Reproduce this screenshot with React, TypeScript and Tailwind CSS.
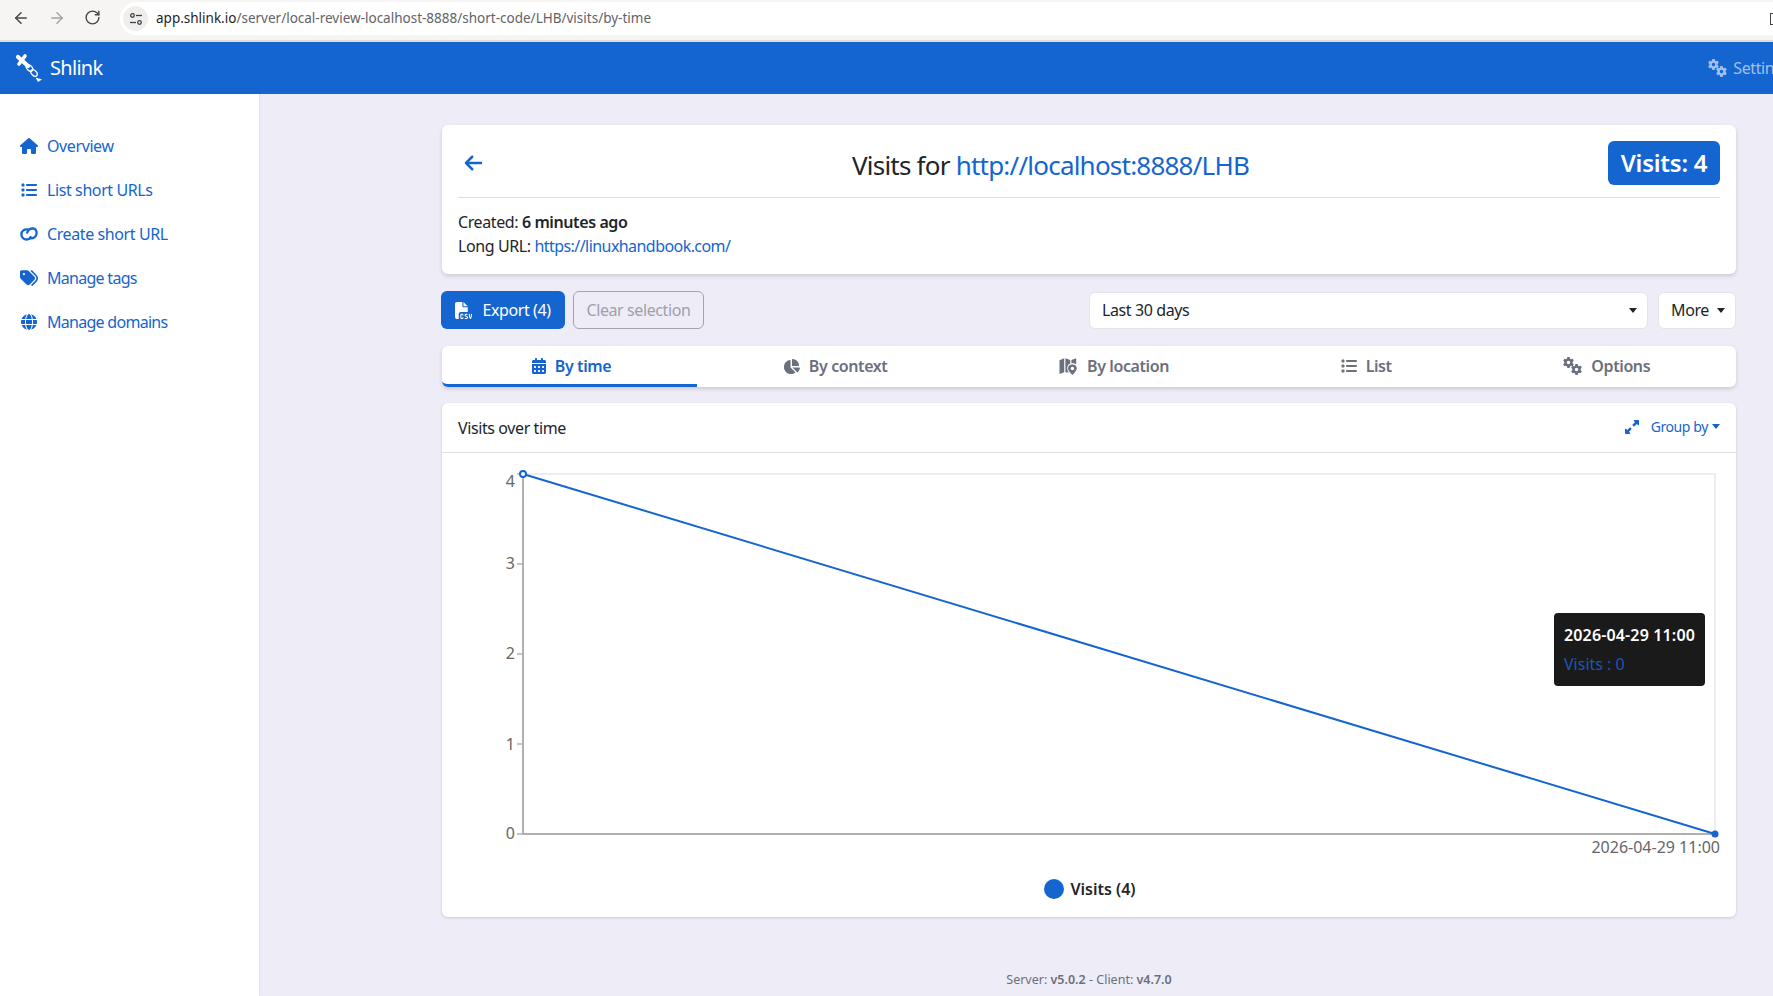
import type { ComponentType } from "react"
import { ArrowLeft, ArrowRight, RotateCw } from "lucide-react"
import {
  FaArrowLeft,
  FaCalendarDays,
  FaChartPie,
  FaFileCsv,
  FaGear,
  FaGlobe,
  FaHouse,
  FaList,
  FaTags,
  FaUpRightAndDownLeftFromCenter,
} from "react-icons/fa6"

type Icon = ComponentType<{ className?: string }>

function GearsIcon({ className }: { className?: string }) {
  return (
    <span className={`relative inline-block h-[18px] w-[19px] shrink-0 ${className ?? ""}`}>
      <FaGear className="absolute left-0 top-0 h-[11px] w-[11px]" />
      <FaGear className="absolute bottom-0 right-0 h-[11px] w-[11px]" />
    </span>
  )
}

function LinkIcon({ className }: { className?: string }) {
  return (
    <svg viewBox="0 0 18 14" fill="none" stroke="currentColor" strokeWidth="2.3" strokeLinecap="round" className={className}>
      <path d="M8.3 2.6 C4.4 1.6 1.4 4 1.4 7.4 C1.4 10.8 4.4 12.9 7.4 12.4 C9 12.1 10 11.2 10.6 10.1" />
      <path d="M7.2 5.6 C7.9 3.1 10.4 1.3 13 1.5 C15.3 1.7 16.8 3.8 16.6 6.2 C16.4 9.6 13.6 11.6 10.6 11.4" />
    </svg>
  )
}

function MapPinIcon({ className }: { className?: string }) {
  return (
    <svg viewBox="0 0 19 18" className={className} fill="currentColor">
      <path d="M0.5 3.2 L5.2 1.2 V15.2 L0.5 17 Z" />
      <path d="M6.4 1.2 L11.2 3 V6.6 C9.4 7.4 8.2 9.2 8.2 11.2 C8.2 12.6 9 14.2 9.9 15.6 L6.4 15.2 Z" />
      <path d="M12.4 3 L17.2 1.2 V7.6 C16.2 6.6 14.6 6 12.4 6.4 Z" />
      <path d="M13.4 7.4 A4.4 4.4 0 0 0 9 11.6 C9 13.6 11.6 16.4 13.4 18 C15.2 16.4 17.8 13.6 17.8 11.6 A4.4 4.4 0 0 0 13.4 7.4 Z" />
      <circle cx="13.4" cy="11.5" r="1.7" fill="#fff" />
    </svg>
  )
}

const navItems: { label: string; icon: Icon; iconClass: string; labelClass?: string }[] = [
  { label: "Overview", icon: FaHouse, iconClass: "h-[16px] w-[18px]" },
  { label: "List short URLs", icon: FaList, iconClass: "h-[16px] w-[16px]" },
  { label: "Create short URL", icon: LinkIcon, iconClass: "h-[14px] w-[18px]" },
  { label: "Manage tags", icon: FaTags, iconClass: "h-[18px] w-[18px]", labelClass: "tracking-[-0.045em]" },
  { label: "Manage domains", icon: FaGlobe, iconClass: "h-[16px] w-[16px]", labelClass: "tracking-[-0.045em]" },
]

const tabs: { label: string; icon: Icon; iconClass: string; active?: boolean }[] = [
  { label: "By time", icon: FaCalendarDays, iconClass: "h-[16px] w-[14px]", active: true },
  { label: "By context", icon: FaChartPie, iconClass: "h-[17px] w-[17px]" },
  { label: "By location", icon: MapPinIcon, iconClass: "h-[18px] w-[19px]" },
  { label: "List", icon: FaList, iconClass: "h-[16px] w-[16px]" },
  { label: "Options", icon: GearsIcon, iconClass: "" },
]

const yTicks = [
  { label: "4", y: 21, textY: 35 },
  { label: "3", y: 111, textY: 117 },
  { label: "2", y: 201, textY: 207 },
  { label: "1", y: 291, textY: 298 },
  { label: "0", y: 381, textY: 387 },
]

function ShlinkLogo() {
  return (
    <svg width="28" height="30" viewBox="0 0 28 30" fill="none" className="shrink-0">
      <path d="M3 4 L13 13" stroke="#fff" strokeWidth="4.2" strokeLinecap="round" />
      <path d="M10 3 L4 11" stroke="#fff" strokeWidth="3.6" strokeLinecap="round" />
      <ellipse cx="14.5" cy="15" rx="2.5" ry="3.8" transform="rotate(-45 14.5 15)" stroke="#fff" strokeWidth="1.3" />
      <ellipse cx="19" cy="20" rx="2.5" ry="3.8" transform="rotate(-45 19 20)" stroke="#fff" strokeWidth="1.3" />
      <path d="M20.5 24.5 L27 26.5 L23 29 Z" fill="#fff" />
    </svg>
  )
}

function BrowserBar() {
  return (
    <div className="flex h-[42px] items-start border-b-2 border-[#dedcd9] bg-[#f6f5f3] tracking-normal">
      <div className="flex h-[35px] w-[120px] shrink-0 items-center">
        <ArrowLeft className="ml-[12px] h-[18px] w-[18px] text-[#45474a]" strokeWidth={2} />
        <ArrowRight className="ml-[18px] h-[18px] w-[18px] text-[#a4a5a7]" strokeWidth={2} />
        <RotateCw className="ml-[18px] h-[17px] w-[17px] text-[#45474a]" strokeWidth={2} />
      </div>
      <div className="mt-[2px] flex h-[33px] flex-1 items-center rounded-l-full bg-white pl-[3px]">
        <div className="flex h-[25px] w-[25px] items-center justify-center rounded-full bg-[#efeeec]">
          <svg width="14" height="14" viewBox="0 0 14 14" fill="none" stroke="#3c3f43" strokeWidth="1.3">
            <circle cx="3.5" cy="3.5" r="1.8" />
            <path d="M7 3.5 H13" />
            <circle cx="10.5" cy="10.5" r="1.8" />
            <path d="M1 10.5 H7" />
          </svg>
        </div>
        <span className="ml-[8px] text-[13.5px] text-[#5f6368]">
          <span className="text-[#1f1f1f]">app.shlink.io</span>
          /server/local-review-localhost-8888/short-code/LHB/visits/by-time
        </span>
        <span className="ml-auto h-[12px] w-[3px] border-y border-l border-[#444]" />
      </div>
    </div>
  )
}

function Caret({ className }: { className: string }) {
  return <span className={`inline-block border-x-[4.5px] border-t-[5px] border-x-transparent ${className}`} />
}

function VisitsChart() {
  return (
    <div className="relative tracking-normal">
      <svg width="1294" height="412" viewBox="0 0 1294 412" className="block" fontFamily="'Noto Sans', sans-serif">
        <path d="M81 21 H1273 V381" stroke="#e7e7e7" strokeWidth="1.5" fill="none" />
        <path d="M81 21 V381 H1273" stroke="#b0b0b0" strokeWidth="2" fill="none" />
        {yTicks.map((tick) => (
          <g key={tick.label}>
            <path d={`M75 ${tick.y} H81`} stroke="#b0b0b0" strokeWidth="1.5" />
            <text x="73" y={tick.textY - 1} textAnchor="end" fontSize="16" fill="#666666">
              {tick.label}
            </text>
          </g>
        ))}
        <path d="M81 21 L1273 381" stroke="#1565d0" strokeWidth="2" />
        <circle cx="81" cy="21" r="3" fill="#fff" stroke="#1565d0" strokeWidth="2" />
        <circle cx="1273" cy="381" r="3.5" fill="#1565d0" />
        <text x="1278" y="400" textAnchor="end" fontSize="16" fill="#666666">
          2026-04-29 11:00
        </text>
      </svg>
      <div className="absolute left-[1112px] top-[160px] h-[73px] w-[151px] rounded bg-[#1a1a1a] px-[10px] pt-[10px] text-[16px] leading-6">
        <div className="whitespace-nowrap font-semibold tracking-[0.15px] text-white">2026-04-29 11:00</div>
        <div className="mt-[5px] text-[#1a56b8]">Visits : 0</div>
      </div>
    </div>
  )
}

export default function App() {
  return (
    <div className="h-[996px] w-[1773px] overflow-hidden bg-[#eeedf7] font-['Noto_Sans',sans-serif] text-[16px] tracking-[-0.025em] text-[#212529]">
      <BrowserBar />

      <header className="flex h-[52px] w-[1807px] items-center justify-between bg-[#1565d0] pl-[15px] pr-[16px] text-white">
        <div className="flex items-center gap-[7px]">
          <ShlinkLogo />
          <span className="text-[20px] tracking-[-0.035em]">Shlink</span>
        </div>
        <div className="flex items-center gap-[6px] text-[#9fc0ee]">
          <GearsIcon />
          <span>Settings</span>
        </div>
      </header>

      <div className="flex h-[902px]">
        <aside className="w-[259px] shrink-0 bg-white pt-[30px] shadow-[1px_0_2px_rgba(0,0,0,0.05)]">
          <ul className="flex flex-col">
            {navItems.map(({ label, icon: NavIcon, iconClass, labelClass }) => (
              <li key={label} className="flex h-[44px] items-center gap-[9px] pl-[20px] text-[#1565d0]">
                <span className="flex w-[18px] justify-center">
                  <NavIcon className={iconClass} />
                </span>
                <span className={labelClass}>{label}</span>
              </li>
            ))}
          </ul>
        </aside>

        <main className="flex min-w-0 flex-1 flex-col pl-[183px] pr-[37px] pt-[31px]">
          <section className="flex h-[149px] flex-col rounded-md bg-white px-4 shadow-[0_2px_4px_rgba(0,0,0,0.15)]">
            <div className="flex h-[73px] items-center justify-between border-b border-[#dfdfe3]">
              <FaArrowLeft className="ml-[6px] mt-[4px] h-[20px] w-[19px] text-[#1565d0]" />
              <h1 className="ml-[10px] mt-[8px] text-[26px] leading-8 tracking-[-0.03em]">
                Visits for <a className="text-[#1565d0]">http://localhost:8888/LHB</a>
              </h1>
              <span className="mt-[4px] flex h-[44px] w-[112px] items-center justify-center rounded-md bg-[#1565d0] text-[24px] font-semibold tracking-[-0.01em] text-white">
                Visits: 4
              </span>
            </div>
            <div className="pt-[12px] leading-6">
              <div>
                Created: <b className="font-semibold">6 minutes ago</b>
              </div>
              <div>
                Long URL: <a className="tracking-[-0.035em] text-[#1565d0]">https://linuxhandbook.com/</a>
              </div>
            </div>
          </section>

          <div className="mt-[17px] flex h-[38px] items-center">
            <button className="-ml-[1px] flex h-[38px] w-[124px] items-center justify-center gap-[10px] rounded-md bg-[#1565d0] text-white">
              <FaFileCsv className="h-[17px] w-[17px]" />
              Export (4)
            </button>
            <button className="ml-[8px] h-[38px] w-[131px] rounded-md border border-[#a5a3ad] text-[#a09fa8]">
              Clear selection
            </button>
            <div className="ml-auto flex h-[37px] w-[559px] items-center justify-between rounded-md border border-[#e4e3ec] bg-white pl-[12px] pr-[10px]">
              Last 30 days
              <Caret className="border-t-[#212529]" />
            </div>
            <div className="ml-[10px] flex h-[37px] w-[78px] items-center justify-center gap-[8px] rounded-md border border-[#e4e3ec] bg-white pl-[2px]">
              More
              <Caret className="border-t-[#212529]" />
            </div>
          </div>

          <nav className="mt-[17px] flex h-[41px] rounded-md bg-white shadow-[0_2px_4px_rgba(0,0,0,0.15)]">
            {tabs.map(({ label, icon: TabIcon, iconClass, active }) => (
              <div
                key={label}
                className={
                  active
                    ? "flex flex-auto items-center justify-center gap-[9px] rounded-bl-md border-b-[3px] border-[#1565d0] pl-[20px] pr-[16px] pt-[2px] font-semibold text-[#1565d0]"
                    : "flex flex-auto items-center justify-center gap-[9px] border-b-[3px] border-transparent px-4 pt-[2px] font-semibold text-[#6c6f7d]"
                }
              >
                <TabIcon className={iconClass} />
                {label}
              </div>
            ))}
          </nav>

          <section className="mt-[16px] h-[514px] rounded-md bg-white shadow-[0_1px_3px_rgba(0,0,0,0.15)]">
            <div className="flex h-[50px] items-center justify-between border-b border-[#dfdfe3] px-4">
              <span>Visits over time</span>
              <div className="mb-[2px] flex items-center gap-[12px] text-[14px] text-[#1565d0]">
                <FaUpRightAndDownLeftFromCenter className="h-[14px] w-[14px]" />
                <span className="flex items-center gap-[4px]">
                  Group by
                  <Caret className="border-t-[#1565d0]" />
                </span>
              </div>
            </div>
            <VisitsChart />
            <div className="mt-[12px] flex items-center justify-center gap-[6px] pl-[2px] font-semibold tracking-normal">
              <span className="h-[20px] w-[20px] rounded-full bg-[#1565d0]" />
              Visits (4)
            </div>
          </section>

          <footer className="mt-[54px] text-center text-[12.5px] tracking-normal text-[#6c6f7d]">
            Server: <b className="font-semibold">v5.0.2</b> - Client: <b className="font-semibold">v4.7.0</b>
          </footer>
        </main>
      </div>
    </div>
  )
}
